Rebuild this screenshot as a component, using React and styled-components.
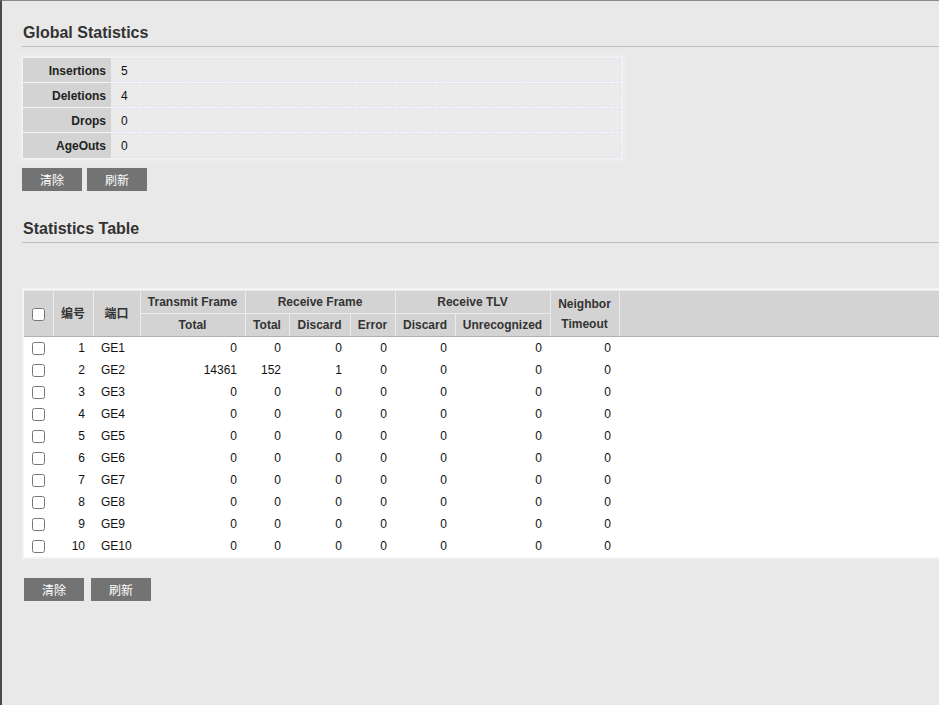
import React from "react";
import styled, { createGlobalStyle } from "styled-components";

const GlobalStyle = createGlobalStyle`
  html, body {
    margin: 0;
    padding: 0;
    background: #e9e9e9;
    overflow: hidden;
  }
  body {
    font-family: "Liberation Sans", Arial, "Noto Sans CJK SC", sans-serif;
    font-size: 12px;
    color: #000;
  }
`;

const globalStats = [
  { label: "Insertions", value: 5 },
  { label: "Deletions", value: 4 },
  { label: "Drops", value: 0 },
  { label: "AgeOuts", value: 0 },
];

const rows = Array.from({ length: 10 }, (_, i) => ({
  id: i + 1,
  port: `GE${i + 1}`,
  txTotal: i === 1 ? 14361 : 0,
  rxTotal: i === 1 ? 152 : 0,
  rxDiscard: i === 1 ? 1 : 0,
  rxError: 0,
  tlvDiscard: 0,
  tlvUnrec: 0,
  timeout: 0,
}));

export default function App() {
  return (
    <>
      <GlobalStyle />
      <Page>
        <SectionTitle>Global Statistics</SectionTitle>
        <StatsBox>
          {globalStats.map((s, i) => (
            <StatsRow key={s.label} $last={i === globalStats.length - 1}>
              <StatsLabel>{s.label}</StatsLabel>
              <StatsValue>{s.value}</StatsValue>
            </StatsRow>
          ))}
        </StatsBox>
        <ButtonBar $gap={5} $top={9}>
          <Button>清除</Button>
          <Button>刷新</Button>
        </ButtonBar>

        <SectionTitle $top={28}>Statistics Table</SectionTitle>
        <TableWrap>
          <Table>
            <colgroup>
              <col style={{ width: 29 }} />
              <col style={{ width: 40 }} />
              <col style={{ width: 47 }} />
              <col style={{ width: 105 }} />
              <col style={{ width: 44 }} />
              <col style={{ width: 61 }} />
              <col style={{ width: 45 }} />
              <col style={{ width: 60 }} />
              <col style={{ width: 95 }} />
              <col style={{ width: 69 }} />
              <col />
            </colgroup>
            <thead>
              <tr>
                <Th rowSpan={2} $bottom>
                  <Check type="checkbox" />
                </Th>
                <Th rowSpan={2} $bottom>编号</Th>
                <Th rowSpan={2} $bottom>端口</Th>
                <Th>Transmit Frame</Th>
                <Th colSpan={3}>Receive Frame</Th>
                <Th colSpan={2}>Receive TLV</Th>
                <Th rowSpan={2} $bottom>
                  Neighbor
                  <br />
                  Timeout
                </Th>
                <Th rowSpan={2} $bottom $filler />
              </tr>
              <tr>
                <Th $bottom>Total</Th>
                <Th $bottom>Total</Th>
                <Th $bottom>Discard</Th>
                <Th $bottom>Error</Th>
                <Th $bottom>Discard</Th>
                <Th $bottom>Unrecognized</Th>
              </tr>
            </thead>
            <tbody>
              {rows.map((r) => (
                <tr key={r.id}>
                  <Td $align="center">
                    <Check type="checkbox" />
                  </Td>
                  <Td $align="right">{r.id}</Td>
                  <Td>{r.port}</Td>
                  <Td $align="right">{r.txTotal}</Td>
                  <Td $align="right">{r.rxTotal}</Td>
                  <Td $align="right">{r.rxDiscard}</Td>
                  <Td $align="right">{r.rxError}</Td>
                  <Td $align="right">{r.tlvDiscard}</Td>
                  <Td $align="right">{r.tlvUnrec}</Td>
                  <Td $align="right">{r.timeout}</Td>
                  <Td />
                </tr>
              ))}
            </tbody>
          </Table>
        </TableWrap>
        <ButtonBar $gap={7} $top={19} $left={2}>
          <Button>清除</Button>
          <Button>刷新</Button>
        </ButtonBar>
      </Page>
    </>
  );
}

const Page = styled.div`
  min-height: 100vh;
  box-sizing: border-box;
  border-left: 2px solid #4a4a4a;
  border-top: 1px solid #8a8a8a;
  padding: 22px 0 0 20px;
`;

const SectionTitle = styled.h2`
  margin: ${(p) => p.$top || 0}px 0 0;
  font-size: 16px;
  font-weight: bold;
  color: #333;
  line-height: 20px;
  padding: 0 0 3px 1px;
  border-bottom: 1px solid #bdbdbd;
`;

const StatsBox = styled.div`
  margin-top: 10px;
  width: 598px;
  border: 1px solid #f3f3f3;
  box-shadow: 0 0 4px 2px #f0f0f0;
  background: #ebebeb;
`;

const StatsRow = styled.div`
  display: flex;
  height: 25px;
  border-bottom: ${(p) => (p.$last ? "none" : "1px solid #f5f5f5")};
  box-sizing: border-box;
`;

const StatsLabel = styled.div`
  width: 88px;
  flex: none;
  background: #d3d3d3;
  font-weight: bold;
  color: #222;
  text-align: right;
  padding: 1px 5px 0 0;
  box-sizing: border-box;
  line-height: 24px;
`;

const StatsValue = styled.div`
  flex: 1;
  padding: 1px 0 0 10px;
  line-height: 22px;
  border-top: 1px dashed #e2e2f6;
  border-bottom: 1px dashed #e2e2f6;
  border-right: 1px dashed #e2e2f6;
  color: #111;
`;

const ButtonBar = styled.div`
  display: flex;
  gap: ${(p) => p.$gap}px;
  margin-top: ${(p) => p.$top || 10}px;
  margin-left: ${(p) => p.$left || 0}px;
`;

const Button = styled.button`
  width: 60px;
  height: 23px;
  border: none;
  background: #737373;
  color: #fff;
  font-family: inherit;
  font-size: 12px;
  padding: 0;
  cursor: pointer;
  &:hover {
    background: #5e5e5e;
  }
`;

const TableWrap = styled.div`
  margin-top: 45px;
  width: 960px;
  border: 2px solid #f4f4f4;
  background: #fff;
`;

const Table = styled.table`
  width: 100%;
  border-collapse: collapse;
  table-layout: fixed;
`;

const Th = styled.th`
  background: #d3d3d3;
  color: #333;
  font-weight: bold;
  font-size: 12px;
  height: 22px;
  padding: 0;
  line-height: 20px;
  text-align: center;
  border-left: 1px solid ${(p) => (p.$filler ? "#e8e8e8" : "#ebebeb")};
  border-right: 1px solid #ebebeb;
  border-top: 1px solid #ebebeb;
  border-bottom: 1px solid ${(p) => (p.$bottom ? "#b0b0b0" : "#ebebeb")};
  &:first-child {
    border-left: none;
  }
`;

const Td = styled.td`
  height: 22px;
  padding: 0 8px;
  text-align: ${(p) => p.$align || "left"};
  font-size: 12px;
  color: #111;
  white-space: nowrap;
`;

const Check = styled.input`
  width: 13px;
  height: 13px;
  margin: 0;
  vertical-align: middle;
`;
